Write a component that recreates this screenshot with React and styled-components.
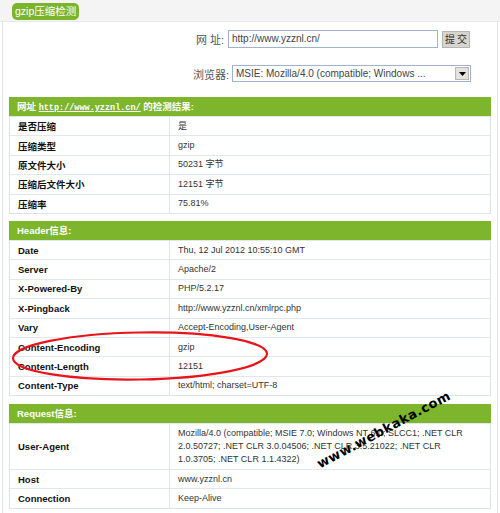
import React from "react";
import styled, { createGlobalStyle } from "styled-components";

const GlobalStyle = createGlobalStyle`
  html, body {
    margin: 0;
    padding: 0;
    background: #ffffff;
  }
  body {
    font-family: "Liberation Sans", "Noto Sans CJK SC", sans-serif;
    color: #333;
  }
`;

const Page = styled.div`
  position: relative;
  width: 500px;
  height: 513px;
  overflow: hidden;
  background: #fff;
`;

const TopBar = styled.div`
  height: 22px;
  padding: 3px 0 0 12px;
  box-sizing: border-box;
  background: #f4f4f4;
  border-bottom: 1px solid #e8e8e8;
  display: flex;
  align-items: flex-start;
`;

const Tab = styled.div`
  height: 17px;
  padding: 0 3px;
  line-height: 17px;
  background: #7ab52d;
  border-radius: 5px;
  color: #fff;
  font-size: 10.5px;
`;

const Panel = styled.div`
  margin: 0 2px;
  padding: 0 6px 0 6px;
  border-left: 1px solid #e4e4e4;
  border-right: 1px solid #e4e4e4;
  height: 491px;
  box-sizing: border-box;
`;

const Form = styled.div`
  height: 75px;
  padding: 8px 20px 0 0;
  box-sizing: border-box;
  display: flex;
  flex-direction: column;
  align-items: flex-end;
  gap: 17px;
`;

const FormRow = styled.div`
  display: flex;
  align-items: center;
  gap: ${props => props.gap || 4}px;
  margin-right: ${props => props.shift || 0}px;
`;

const FormLabel = styled.span`
  font-size: 11px;
  color: #555;
`;

const TextInput = styled.div`
  width: 210px;
  height: 18px;
  box-sizing: border-box;
  border: 1px solid #9fb4cc;
  padding-left: 3px;
  font-size: 10px;
  line-height: 16px;
  color: #444;
`;

const SubmitButton = styled.div`
  width: 28px;
  height: 17px;
  box-sizing: border-box;
  border: 1px solid #b5b5b5;
  background: #d8d5d0;
  color: #333;
  font-size: 10px;
  line-height: 15px;
  text-align: center;
  letter-spacing: 2px;
  text-indent: 2px;
`;

const SelectBox = styled.div`
  width: 239px;
  height: 17px;
  box-sizing: border-box;
  border: 1px solid #9fb4cc;
  display: flex;
  align-items: center;
  justify-content: space-between;
  padding: 0 1px 0 3px;
  font-size: 10px;
  color: #444;
`;

const ArrowBtn = styled.span`
  width: 14px;
  height: 13px;
  box-sizing: border-box;
  background: #e4e2de;
  border: 1px solid #b8b8b8;
  display: flex;
  align-items: center;
  justify-content: center;
`;

const Section = styled.div`
  border: 1px solid #dde3ea;
  border-top: 0;
  margin-top: ${props => props.gap || 0}px;
`;

const SectionHead = styled.div`
  height: 19px;
  line-height: 19px;
  background: #7db52d;
  color: #fff;
  font-weight: bold;
  font-size: 9.5px;
  padding-left: 8px;
  margin: 0 -1px;
`;

const HeadLink = styled.span`
  font-family: "Liberation Mono", monospace;
  font-size: 8.5px;
  text-decoration: underline;
`;

const Row = styled.div`
  display: grid;
  grid-template-columns: 160px 1fr;
  height: ${props => props.tall || 19.4}px;
  box-sizing: border-box;
  border-top: 1px solid #e2e7ee;
`;

const LabelCell = styled.div`
  display: flex;
  align-items: center;
  padding-left: 8px;
  border-right: 1px solid #e2e7ee;
  font-weight: bold;
  font-size: 9.5px;
  color: #111;
`;

const ValueCell = styled.div`
  display: flex;
  align-items: center;
  padding-left: 8px;
  font-size: 9px;
  color: #333;
  line-height: 13px;
`;

const Overlay = styled.svg`
  position: absolute;
  left: 0;
  top: 0;
  pointer-events: none;
`;

const Watermark = styled.div`
  position: absolute;
  left: 309px;
  top: 420px;
  width: 150px;
  height: 20px;
  line-height: 20px;
  text-align: center;
  font-family: "DejaVu Sans", sans-serif;
  font-weight: bold;
  font-size: 13px;
  letter-spacing: 0.6px;
  color: #000;
  transform: rotate(-28deg);
  pointer-events: none;
`;

const result = [
  ["是否压缩", "是"],
  ["压缩类型", "gzip"],
  ["原文件大小", "50231 字节"],
  ["压缩后文件大小", "12151 字节"],
  ["压缩率", "75.81%"],
];

const headers = [
  ["Date", "Thu, 12 Jul 2012 10:55:10 GMT"],
  ["Server", "Apache/2"],
  ["X-Powered-By", "PHP/5.2.17"],
  ["X-Pingback", "http://www.yzznl.cn/xmlrpc.php"],
  ["Vary", "Accept-Encoding,User-Agent"],
  ["Content-Encoding", "gzip"],
  ["Content-Length", "12151"],
  ["Content-Type", "text/html; charset=UTF-8"],
];

function InfoRow({ label, children, tall }) {
  return (
    <Row tall={tall}>
      <LabelCell>{label}</LabelCell>
      <ValueCell>{children}</ValueCell>
    </Row>
  );
}

export default function App() {
  return (
    <Page>
      <GlobalStyle />
      <TopBar>
        <Tab>gzip压缩检测</Tab>
      </TopBar>
      <Panel>
        <Form>
          <FormRow shift={1}>
            <FormLabel>网 址:</FormLabel>
            <TextInput>http://www.yzznl.cn/</TextInput>
            <SubmitButton>提交</SubmitButton>
          </FormRow>
          <FormRow gap={3}>
            <FormLabel>浏览器:</FormLabel>
            <SelectBox>
              <span>MSIE: Mozilla/4.0 (compatible; Windows ...</span>
              <ArrowBtn>
                <svg width="7" height="4" viewBox="0 0 7 4">
                  <path d="M0 0h7L3.5 4z" fill="#000" />
                </svg>
              </ArrowBtn>
            </SelectBox>
          </FormRow>
        </Form>

        <Section>
          <SectionHead>
            网址 <HeadLink>http://www.yzznl.cn/</HeadLink> 的检测结果:
          </SectionHead>
          {result.map(([k, v]) => (
            <InfoRow key={k} label={k}>{v}</InfoRow>
          ))}
        </Section>

        <Section gap={7}>
          <SectionHead>Header信息:</SectionHead>
          {headers.map(([k, v]) => (
            <InfoRow key={k} label={k}>{v}</InfoRow>
          ))}
        </Section>

        <Section gap={8}>
          <SectionHead>Request信息:</SectionHead>
          <InfoRow label="User-Agent" tall={46}>
            <span>
              Mozilla/4.0 (compatible; MSIE 7.0; Windows NT 6.0; SLCC1; .NET CLR
              <br />
              2.0.50727; .NET CLR 3.0.04506; .NET CLR 3.5.21022; .NET CLR
              <br />
              1.0.3705; .NET CLR 1.1.4322)
            </span>
          </InfoRow>
          <InfoRow label="Host">www.yzznl.cn</InfoRow>
          <InfoRow label="Connection">Keep-Alive</InfoRow>
        </Section>
      </Panel>

      <Overlay width="500" height="513" viewBox="0 0 500 513">
        <ellipse
          cx="140"
          cy="356"
          rx="127"
          ry="23.5"
          fill="none"
          stroke="#e8141b"
          strokeWidth="2.2"
          transform="rotate(-1 140 356)"
        />
      </Overlay>
      <Watermark>www.webkaka.com</Watermark>
    </Page>
  );
}
